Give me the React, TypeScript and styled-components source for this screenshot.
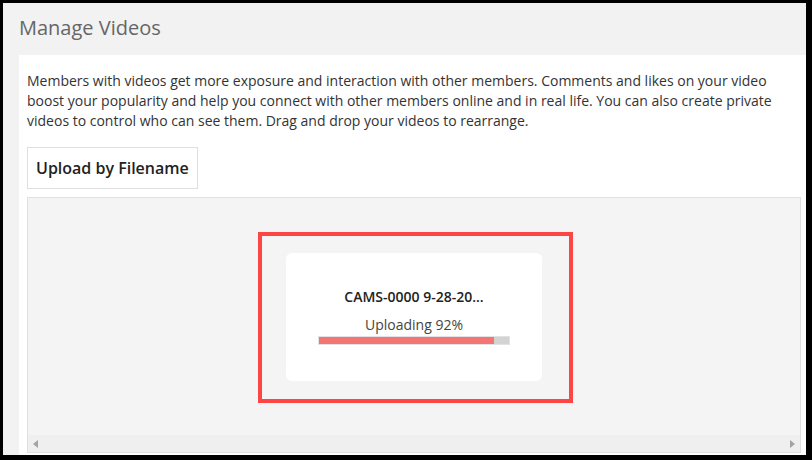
import React from "react";
import styled, { createGlobalStyle } from "styled-components";

const GlobalStyle = createGlobalStyle`
  html, body {
    margin: 0;
    padding: 0;
    background: #000;
  }
  * {
    box-sizing: border-box;
  }
`;

const Frame = styled.div`
  width: 812px;
  height: 460px;
  background: #000;
  padding: 3px 6px 5px 3px;
  font-family: "Open Sans", "Liberation Sans", sans-serif;
`;

const Page = styled.div`
  height: 100%;
  background: #f2f2f2;
  padding: 11px 0 0 16px;
  display: flex;
  flex-direction: column;
  overflow: hidden;
`;

const Title = styled.h1`
  margin: 0 0 13px 0;
  font-size: 20px;
  line-height: 28px;
  font-weight: 400;
  color: #666;
`;

const Panel = styled.div`
  flex: 1;
  background: #fff;
  padding: 16px 5px 0 8px;
  display: flex;
  flex-direction: column;
  align-items: flex-start;
`;

const Intro = styled.p`
  margin: 0;
  font-size: 14px;
  line-height: 20px;
  color: #333;
`;

const UploadButton = styled.button`
  margin-top: 16px;
  height: 42px;
  padding: 0 8px;
  background: #fff;
  border: 1px solid #dfdfdf;
  font-family: inherit;
  font-size: 16px;
  font-weight: 600;
  color: #222;
  cursor: pointer;
`;

const DropZone = styled.div`
  position: relative;
  align-self: stretch;
  margin-top: 8px;
  height: 256px;
  background: #f4f4f4;
  border: 1px solid #e0e0e0;
  display: flex;
  flex-direction: column;
`;

const Stage = styled.div`
  flex: 1;
  display: flex;
  align-items: center;
  justify-content: center;
`;

const UploadCard = styled.div`
  width: 256px;
  height: 128px;
  background: #fff;
  border-radius: 6px;
  padding-top: 34px;
  display: flex;
  flex-direction: column;
  align-items: center;
`;

const FileName = styled.div`
  font-size: 14px;
  line-height: 19px;
  font-weight: 600;
  color: #222;
`;

const Status = styled.div`
  margin-top: 9px;
  font-size: 14px;
  line-height: 20px;
  color: #444;
`;

const Progress = styled.div`
  margin-top: 1px;
  width: 192px;
  height: 9px;
  background: #d3d3d3;
  border: 1px solid #e2e2e2;
`;

const ProgressFill = styled.div`
  height: 100%;
  background: #f57474;
`;

const ScrollTrack = styled.div`
  height: 17px;
  background: #efefef;
  display: flex;
  align-items: center;
  justify-content: space-between;
  padding: 0 5px;
`;

const Arrow = styled.span<{ $dir: "left" | "right" }>`
  width: 0;
  height: 0;
  border-top: 4px solid transparent;
  border-bottom: 4px solid transparent;
  ${(p) =>
    p.$dir === "left"
      ? "border-right: 5px solid #a3a3a3;"
      : "border-left: 5px solid #a3a3a3;"}
`;

const Highlight = styled.div`
  position: absolute;
  left: 230px;
  top: 34px;
  width: 315px;
  height: 171px;
  border: 4px solid #ff4444;
  pointer-events: none;
`;

export default function App() {
  const progress = 92;

  return (
    <>
      <GlobalStyle />
      <Frame>
        <Page>
          <Title>Manage Videos</Title>
          <Panel>
            <Intro>
              Members with videos get more exposure and interaction with other
              members. Comments and likes on your video boost your popularity
              and help you connect with other members online and in real life.
              You can also create private videos to control who can see them.
              Drag and drop your videos to rearrange.
            </Intro>
            <UploadButton>Upload by Filename</UploadButton>
            <DropZone>
              <Stage>
                <UploadCard>
                  <FileName>CAMS-0000 9-28-20...</FileName>
                  <Status>Uploading {progress}%</Status>
                  <Progress>
                    <ProgressFill style={{ width: `${progress}%` }} />
                  </Progress>
                </UploadCard>
              </Stage>
              <ScrollTrack>
                <Arrow $dir="left" />
                <Arrow $dir="right" />
              </ScrollTrack>
              <Highlight />
            </DropZone>
          </Panel>
        </Page>
      </Frame>
    </>
  );
}
